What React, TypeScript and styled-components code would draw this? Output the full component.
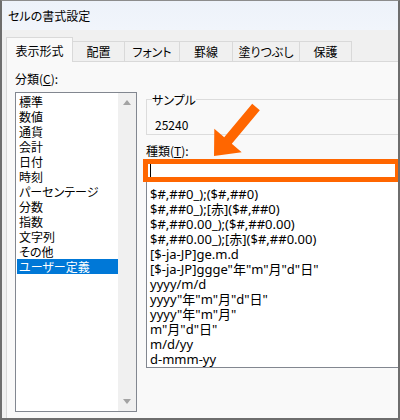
import styled, { createGlobalStyle } from "styled-components";

const GlobalStyle = createGlobalStyle`
  html, body {
    margin: 0;
    padding: 0;
    overflow: hidden;
    background: #ffffff;
  }
  body {
    font-family: "Noto Sans CJK JP", "Noto Sans", sans-serif;
    font-size: 12px;
    color: #000;
    font-feature-settings: "palt";
  }
`;

const Window = styled.div`
  position: relative;
  width: 400px;
  height: 420px;
  box-sizing: border-box;
  border: 2px solid #6e6e6e;
  border-top: 1px solid #8c8c8c;
  background: #f0f0f0;
  display: flex;
  flex-direction: column;
  overflow: hidden;
`;

const TitleBar = styled.div`
  height: 29px;
  flex: none;
  display: flex;
  align-items: center;
  padding-left: 6px;
  background: linear-gradient(#edf2fa, #f1f5fb);
  font-size: 12px;
`;

const TabStrip = styled.div`
  height: 32px;
  flex: none;
  display: flex;
  align-items: flex-end;
  padding-left: 4px;
`;

const Tab = styled.div<{ $active?: boolean; $w: number }>`
  width: ${(p) => p.$w}px;
  height: ${(p) => (p.$active ? 25 : 21)}px;
  box-sizing: border-box;
  display: flex;
  align-items: center;
  justify-content: center;
  border-top: 1px solid #d9d9d9;
  border-right: 1px solid #d9d9d9;
  border-left: ${(p) => (p.$active ? "1px solid #d9d9d9" : "none")};
  border-bottom: ${(p) => (p.$active ? "none" : "1px solid #d9d9d9")};
  background: ${(p) => (p.$active ? "#f9f9f9" : "#f0f0f0")};
  white-space: nowrap;
`;

const TabFiller = styled.div`
  flex: 1;
  height: 1px;
  background: #d9d9d9;
`;

const Panel = styled.div`
  flex: 1;
  width: 430px;
  margin-left: 4px;
  box-sizing: border-box;
  border-left: 1px solid #d9d9d9;
  background: #f9f9f9;
  padding: 9px 0 0 8px;
  display: flex;
  gap: 9px;
`;

const LeftColumn = styled.div`
  width: 122px;
  flex: none;
  display: flex;
  flex-direction: column;
`;

const RightColumn = styled.div`
  flex: 1;
  padding-top: 21px;
  display: flex;
  flex-direction: column;
`;

const Label = styled.div<{ $gap?: number }>`
  line-height: 15px;
  height: 15px;
  margin-top: ${(p) => p.$gap ?? 0}px;
  white-space: nowrap;
`;

const CategoryList = styled.div`
  margin-top: 6px;
  height: 320px;
  box-sizing: border-box;
  border: 1px solid #828790;
  background: #fff;
  display: grid;
  grid-template-columns: 1fr 18px;
`;

const CategoryItems = styled.div`
  padding: 1px 0 0 1px;
`;

const CategoryItem = styled.div<{ $selected?: boolean }>`
  height: 15px;
  line-height: 15px;
  padding-left: 2px;
  white-space: nowrap;
  background: ${(p) => (p.$selected ? "#0078d7" : "transparent")};
  color: ${(p) => (p.$selected ? "#fff" : "#000")};
`;

const ScrollBar = styled.div`
  background: #f0f0f0;
  display: flex;
  flex-direction: column;
  justify-content: space-between;
  align-items: center;
  padding: 7px 0;
`;

const Arrow = styled.div<{ $down?: boolean }>`
  width: 0;
  height: 0;
  border-left: 4px solid transparent;
  border-right: 4px solid transparent;
  ${(p) =>
    p.$down
      ? "border-top: 5px solid #a3a3a3;"
      : "border-bottom: 5px solid #a3a3a3;"}
`;

const SampleBox = styled.fieldset`
  margin: 0;
  min-width: 0;
  padding: 10px 0 2px 8px;
  border: 1px solid #dcdcdc;
  line-height: 15px;
`;

const SampleLegend = styled.legend`
  padding: 0;
  margin-left: -3px;
  line-height: 15px;
`;

const TypeInput = styled.div`
  margin-top: 1px;
  margin-left: -3px;
  width: 257px;
  height: 23px;
  box-sizing: border-box;
  border: 5px solid #ff6600;
  background: #fff;
  padding-left: 2px;
  display: flex;
  align-items: center;
`;

const Caret = styled.div`
  width: 1px;
  height: 13px;
  background: #000;
`;

const FormatList = styled.div`
  height: 186px;
  box-sizing: border-box;
  border: 1px solid #828790;
  border-top: none;
  background: #fff;
  padding: 5px 0 0 3px;
  overflow: hidden;
  font-family: "Noto Sans", "Noto Sans CJK JP", sans-serif;
  font-size: 13px;
`;

const FormatItem = styled.div`
  height: 15px;
  line-height: 15px;
  white-space: nowrap;
`;

const Pointer = styled.svg`
  position: absolute;
  left: 208px;
  top: 99px;
  pointer-events: none;
`;

const tabs = [
  { label: "表示形式", w: 67 },
  { label: "配置", w: 52 },
  { label: "フォント", w: 55 },
  { label: "罫線", w: 53 },
  { label: "塗りつぶし", w: 67 },
  { label: "保護", w: 52 },
];

const categories = [
  "標準",
  "数値",
  "通貨",
  "会計",
  "日付",
  "時刻",
  "パーセンテージ",
  "分数",
  "指数",
  "文字列",
  "その他",
  "ユーザー定義",
];

const formats = [
  "$#,##0_);($#,##0)",
  "$#,##0_);[赤]($#,##0)",
  "$#,##0.00_);($#,##0.00)",
  "$#,##0.00_);[赤]($#,##0.00)",
  "[$-ja-JP]ge.m.d",
  '[$-ja-JP]ggge"年"m"月"d"日"',
  "yyyy/m/d",
  'yyyy"年"m"月"d"日"',
  'yyyy"年"m"月"',
  'm"月"d"日"',
  "m/d/yy",
  "d-mmm-yy",
];

const App = () => {
  return (
    <>
      <GlobalStyle />
      <Window>
        <TitleBar>セルの書式設定</TitleBar>
        <TabStrip>
          {tabs.map((t, i) => (
            <Tab key={t.label} $w={t.w} $active={i === 0}>
              {t.label}
            </Tab>
          ))}
          <TabFiller />
        </TabStrip>
        <Panel>
          <LeftColumn>
            <Label>
              分類(<u>C</u>):
            </Label>
            <CategoryList>
              <CategoryItems>
                {categories.map((c) => (
                  <CategoryItem key={c} $selected={c === "ユーザー定義"}>
                    {c}
                  </CategoryItem>
                ))}
              </CategoryItems>
              <ScrollBar>
                <Arrow />
                <Arrow $down />
              </ScrollBar>
            </CategoryList>
          </LeftColumn>
          <RightColumn>
            <SampleBox>
              <SampleLegend>サンプル</SampleLegend>
              25240
            </SampleBox>
            <Label $gap={8}>
              種類(<u>T</u>):
            </Label>
            <TypeInput>
              <Caret />
            </TypeInput>
            <FormatList>
              {formats.map((f) => (
                <FormatItem key={f}>{f}</FormatItem>
              ))}
            </FormatList>
          </RightColumn>
        </Panel>
        <Pointer width="54" height="60" viewBox="210 100 54 60">
          <polygon
            points="214,156 241.7,152.2 231.8,143.8 259.8,110.3 252.2,103.7 224.2,137.2 214.3,128.8"
            fill="#ff6600"
          />
        </Pointer>
      </Window>
    </>
  );
};

export default App;
